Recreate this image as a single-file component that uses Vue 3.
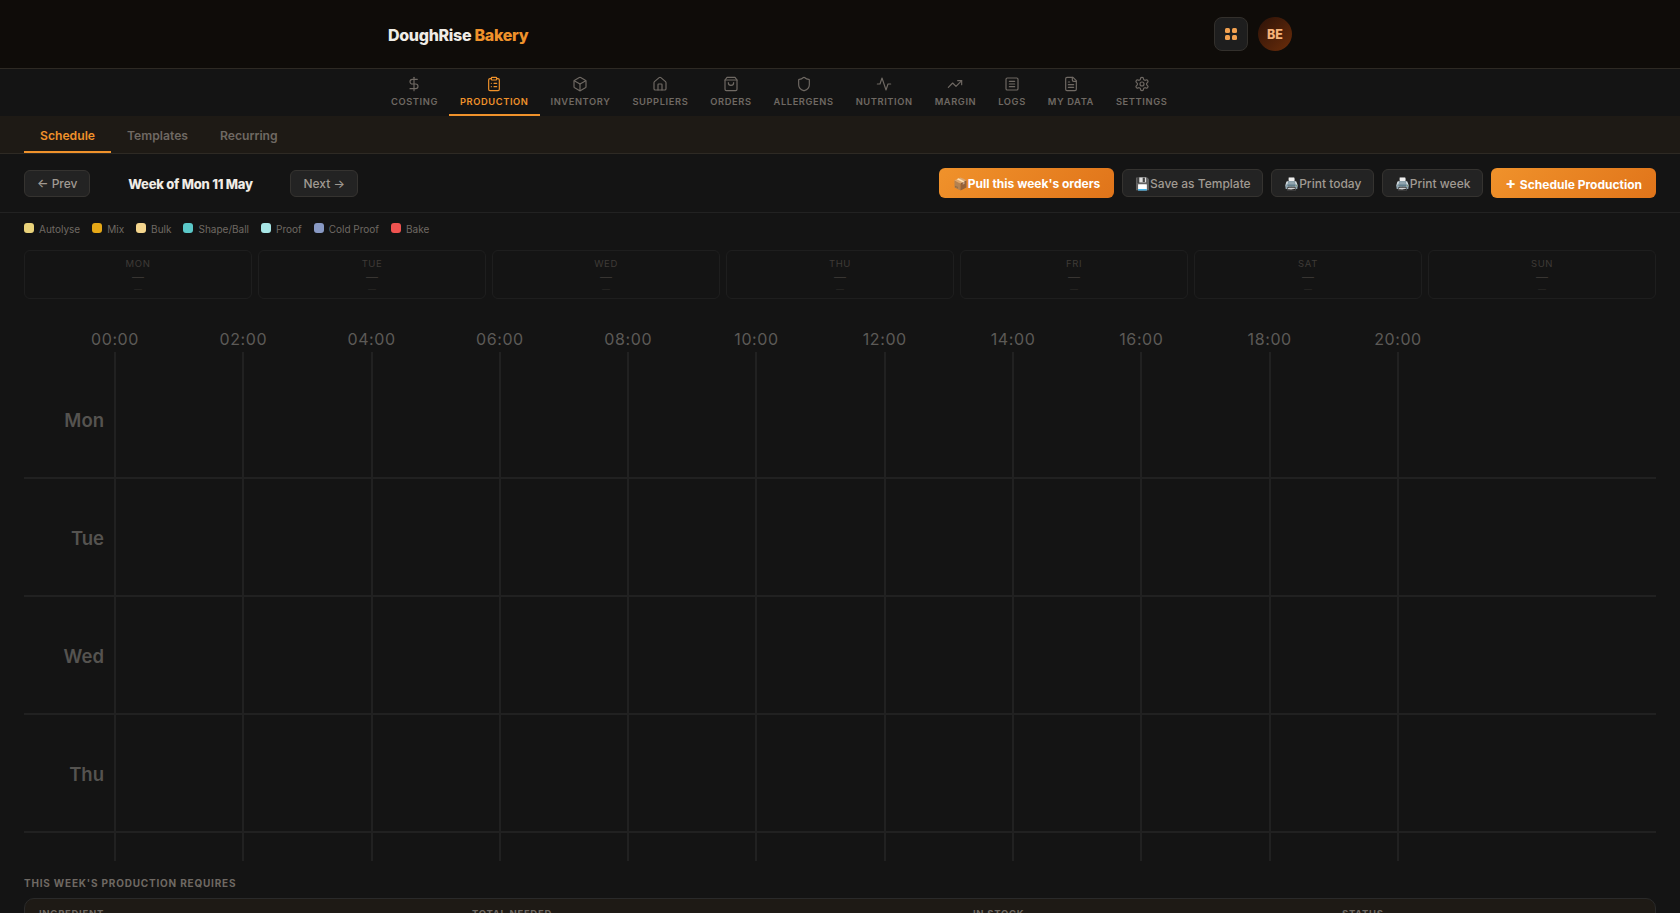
<script setup>
const navItems = [
  { label: 'COSTING', paths: ['M12 2v20', 'M17 5H9.5a3.5 3.5 0 0 0 0 7h5a3.5 3.5 0 0 1 0 7H6'] },
  { label: 'PRODUCTION', active: true, paths: ['M9 2h6a1 1 0 0 1 1 1v2a1 1 0 0 1-1 1H9a1 1 0 0 1-1-1V3a1 1 0 0 1 1-1z', 'M16 4h2a2 2 0 0 1 2 2v14a2 2 0 0 1-2 2H6a2 2 0 0 1-2-2V6a2 2 0 0 1 2-2h2', 'M12 11h4', 'M12 16h4', 'M8 11h.01', 'M8 16h.01'] },
  { label: 'INVENTORY', paths: ['M21 8a2 2 0 0 0-1-1.73l-7-4a2 2 0 0 0-2 0l-7 4A2 2 0 0 0 3 8v8a2 2 0 0 0 1 1.73l7 4a2 2 0 0 0 2 0l7-4A2 2 0 0 0 21 16z', 'M3.3 7 12 12l8.7-5', 'M12 22V12'] },
  { label: 'SUPPLIERS', paths: ['M15 21v-8a1 1 0 0 0-1-1h-4a1 1 0 0 0-1 1v8', 'M3 10a2 2 0 0 1 .71-1.53l7-6a2 2 0 0 1 2.58 0l7 6A2 2 0 0 1 21 10v9a2 2 0 0 1-2 2H5a2 2 0 0 1-2-2z'] },
  { label: 'ORDERS', paths: ['M6 2 3 6v14a2 2 0 0 0 2 2h14a2 2 0 0 0 2-2V6l-3-4z', 'M3 6h18', 'M16 10a4 4 0 0 1-8 0'] },
  { label: 'ALLERGENS', paths: ['M20 13c0 5-3.5 7.5-7.66 8.95a1 1 0 0 1-.67-.01C7.5 20.5 4 18 4 13V6a1 1 0 0 1 1-1c2 0 4.5-1.2 6.24-2.72a1.17 1.17 0 0 1 1.52 0C14.51 3.81 17 5 19 5a1 1 0 0 1 1 1z'] },
  { label: 'NUTRITION', paths: ['M22 12h-4l-3 9L9 3l-3 9H2'] },
  { label: 'MARGIN', paths: ['M22 7 13.5 15.5 8.5 10.5 2 17', 'M16 7h6v6'] },
  { label: 'LOGS', paths: ['M5 3h14a2 2 0 0 1 2 2v14a2 2 0 0 1-2 2H5a2 2 0 0 1-2-2V5a2 2 0 0 1 2-2z', 'M8 8h8', 'M8 12h8', 'M8 16h8'] },
  { label: 'MY DATA', paths: ['M15 2H6a2 2 0 0 0-2 2v16a2 2 0 0 0 2 2h12a2 2 0 0 0 2-2V7z', 'M14 2v4a2 2 0 0 0 2 2h4', 'M10 9H8', 'M16 13H8', 'M16 17H8'] },
  { label: 'SETTINGS', paths: ['M12.22 2h-.44a2 2 0 0 0-2 2v.18a2 2 0 0 1-1 1.73l-.43.25a2 2 0 0 1-2 0l-.15-.08a2 2 0 0 0-2.73.73l-.22.38a2 2 0 0 0 .73 2.73l.15.1a2 2 0 0 1 1 1.72v.51a2 2 0 0 1-1 1.74l-.15.09a2 2 0 0 0-.73 2.73l.22.38a2 2 0 0 0 2.73.73l.15-.08a2 2 0 0 1 2 0l.43.25a2 2 0 0 1 1 1.73V20a2 2 0 0 0 2 2h.44a2 2 0 0 0 2-2v-.18a2 2 0 0 1 1-1.73l.43-.25a2 2 0 0 1 2 0l.15.08a2 2 0 0 0 2.73-.73l.22-.39a2 2 0 0 0-.73-2.73l-.15-.08a2 2 0 0 1-1-1.74v-.5a2 2 0 0 1 1-1.74l.15-.09a2 2 0 0 0 .73-2.73l-.22-.38a2 2 0 0 0-2.73-.73l-.15.08a2 2 0 0 1-2 0l-.43-.25a2 2 0 0 1-1-1.73V4a2 2 0 0 0-2-2z', 'M15 12a3 3 0 1 1-6 0 3 3 0 0 1 6 0z'] }
]
const subTabs = ['Schedule', 'Templates', 'Recurring']
const legend = [
  { label: 'Autolyse', color: '#e9d27a' },
  { label: 'Mix', color: '#e6a817' },
  { label: 'Bulk', color: '#f4d58d' },
  { label: 'Shape/Ball', color: '#5bc8c8' },
  { label: 'Proof', color: '#a8e6e6' },
  { label: 'Cold Proof', color: '#8899c4' },
  { label: 'Bake', color: '#ef5350' }
]
const weekDays = ['MON', 'TUE', 'WED', 'THU', 'FRI', 'SAT', 'SUN']
const hours = ['00:00', '02:00', '04:00', '06:00', '08:00', '10:00', '12:00', '14:00', '16:00', '18:00', '20:00']
const rows = ['Mon', 'Tue', 'Wed', 'Thu']
</script>

<template>
  <div class="page">
    <header class="topbar">
      <div class="logo">DoughRise <span>Bakery</span></div>
      <div class="top-actions">
        <button class="grid-btn" aria-label="Apps">
          <span></span><span></span><span></span><span></span>
        </button>
        <div class="avatar">BE</div>
      </div>
    </header>

    <nav class="mainnav">
      <a v-for="item in navItems" :key="item.label" class="nav-item" :class="{ active: item.active }">
        <svg viewBox="0 0 24 24" width="16" height="16" fill="none" stroke="currentColor" stroke-width="1.75" stroke-linecap="round" stroke-linejoin="round">
          <path v-for="(d, i) in item.paths" :key="i" :d="d" />
        </svg>
        <span>{{ item.label }}</span>
      </a>
    </nav>

    <div class="subtabs">
      <a v-for="(t, i) in subTabs" :key="t" class="subtab" :class="{ active: i === 0 }">{{ t }}</a>
    </div>

    <div class="toolbar">
      <div class="week-nav">
        <button class="btn small">← Prev</button>
        <span class="week-label">Week of Mon 11 May</span>
        <button class="btn small">Next →</button>
      </div>
      <div class="actions">
        <button class="btn primary">📦Pull this week's orders</button>
        <button class="btn">💾Save as Template</button>
        <button class="btn">🖨️Print today</button>
        <button class="btn">🖨️Print week</button>
        <button class="btn primary"><span class="plus">+</span> Schedule Production</button>
      </div>
    </div>

    <div class="legend">
      <div v-for="l in legend" :key="l.label" class="legend-item">
        <i :style="{ background: l.color }"></i>{{ l.label }}
      </div>
    </div>

    <div class="week-cards">
      <div v-for="d in weekDays" :key="d" class="week-card">
        <div class="wc-day">{{ d }}</div>
        <div class="wc-main">—</div>
        <div class="wc-sub">—</div>
      </div>
    </div>

    <section class="gantt">
      <div class="gantt-head">
        <div v-for="h in hours" :key="h" class="hour">{{ h }}</div>
      </div>
      <div class="gantt-body">
        <div class="vlines">
          <i v-for="h in hours" :key="h"></i>
        </div>
        <div v-for="r in rows" :key="r" class="gantt-row">
          <span>{{ r }}</span>
        </div>
        <div class="gantt-tail"></div>
      </div>
    </section>

    <section class="req">
      <h3>THIS WEEK'S PRODUCTION REQUIRES</h3>
      <div class="req-table">
        <span class="c1">INGREDIENT</span>
        <span class="c2">TOTAL NEEDED</span>
        <span class="c3">IN STOCK</span>
        <span class="c4">STATUS</span>
      </div>
    </section>
  </div>
</template>

<style scoped>
.page {
  height: 913px;
  overflow: hidden;
  background: #141414;
  font-family: Inter, "Noto Sans", sans-serif;
  color: #f0ece6;
}
.topbar {
  height: 68px;
  box-sizing: content-box;
  border-bottom: 1px solid #2e2a24;
  background: #0f0c09;
  display: flex;
  align-items: center;
  justify-content: space-between;
  padding: 0 388px;
}
.logo {
  margin-top: 2px;
  font-size: 16px;
  font-weight: 800;
  letter-spacing: -0.3px;
  color: #f0ece6;
}
.logo span { color: #f0922b; }
.top-actions { display: flex; align-items: center; gap: 10px; }
.grid-btn {
  width: 34px;
  height: 34px;
  padding: 0;
  box-sizing: border-box;
  border: 1px solid #33302c;
  border-radius: 8px;
  background: #1e1e1e;
  display: grid;
  grid-template-columns: 5px 5px;
  grid-template-rows: 5px 5px;
  gap: 2.5px;
  place-content: center;
}
.grid-btn span { background: #f0a050; border-radius: 1.5px; }
.avatar {
  width: 34px;
  height: 34px;
  border-radius: 50%;
  background: linear-gradient(135deg, #2c1208, #6b2d0a);
  color: #f5b27a;
  font-size: 12.5px;
  font-weight: 800;
  padding-top: 1px;
  box-sizing: border-box;
  display: flex;
  align-items: center;
  justify-content: center;
}
.mainnav {
  height: 47px;
  background: #141414;
  display: flex;
  justify-content: flex-start;
  padding-left: 380px;
  gap: 0;
}
.nav-item {
  padding: 7px 11px 0;
  box-sizing: border-box;
  height: 47px;
  display: flex;
  flex-direction: column;
  align-items: center;
  gap: 4px;
  color: #6f6963;
  font-size: 9.3px;
  font-weight: 600;
  letter-spacing: 0.6px;
  border-bottom: 2px solid transparent;
}
.nav-item.active { color: #f0922b; border-bottom-color: #f0922b; }
.subtabs {
  height: 38px;
  box-sizing: border-box;
  background: #1e1a15;
  border-bottom: 1px solid #2e2a24;
  display: flex;
  padding-left: 24px;
}
.subtab {
  padding: 2px 16px 0;
  line-height: 36px;
  height: 37px;
  box-sizing: border-box;
  font-size: 12.16px;
  font-weight: 600;
  color: #6f6963;
  border-bottom: 2px solid transparent;
}
.subtab.active { color: #f0922b; border-bottom-color: #f0922b; }
.toolbar {
  height: 59px;
  box-sizing: border-box;
  border-bottom: 1px solid #222;
  display: flex;
  align-items: center;
  justify-content: space-between;
  padding: 0 24px;
}
.week-nav { display: flex; align-items: center; }
.week-label {
  width: 200px;
  padding-top: 1px;
  text-align: center;
  font-size: 13px;
  font-weight: 800;
  letter-spacing: -0.25px;
  color: #f0ece6;
}
.actions { display: flex; align-items: center; gap: 8px; }
.btn {
  height: 28px;
  padding: 1px 11.75px 0;
  font-family: inherit;
  font-size: 12px;
  font-weight: 500;
  color: #a09a92;
  background: #232323;
  border: 1px solid #353330;
  border-radius: 6px;
  white-space: nowrap;
}
.btn.small { height: 27px; padding: 1px 12px 0; }
.btn.primary {
  height: 30px;
  padding: 1px 14px 0;
  font-weight: 700;
  color: #fff;
  border: none;
  background: linear-gradient(135deg, #f0922b, #e0741a);
}
.plus { font-size: 16px; line-height: 1; margin-right: 1px; }
.legend {
  height: 37px;
  box-sizing: border-box;
  padding: 0 24px 5px;
  display: flex;
  align-items: center;
  gap: 12px;
}
.legend-item {
  display: flex;
  align-items: center;
  gap: 5px;
  font-size: 10px;
  color: #6f6963;
}
.legend-item i {
  width: 10px;
  height: 10px;
  border-radius: 3px;
  margin-top: -3px;
}
.week-cards {
  display: grid;
  grid-template-columns: repeat(7, 1fr);
  gap: 6px;
  padding: 0 24px;
}
.week-card {
  height: 49px;
  box-sizing: border-box;
  border: 1px solid #1e1e1e;
  border-radius: 6px;
  display: flex;
  flex-direction: column;
  align-items: center;
  padding-top: 7px;
  color: #383532;
  font-size: 9.5px;
}
.wc-day { letter-spacing: 0.6px; line-height: 12px; color: #3f3b37; }
.wc-main { line-height: 14px; font-size: 12px; }
.wc-sub { line-height: 10px; font-size: 8px; color: #2c2a28; }
.gantt { padding: 0 24px; margin-top: 30px; }
.gantt-head {
  height: 23px;
  display: flex;
  padding-left: 91px;
}
.hour {
  flex: 0 0 128.3px;
  width: 128.3px;
  transform: translateX(-50%);
  text-align: center;
  font-size: 16px;
  line-height: 20px;
  letter-spacing: 0.6px;
  color: #5c5a57;
}
.gantt-body { position: relative; padding-top: 9px; }
.vlines {
  position: absolute;
  top: 0;
  bottom: 0;
  left: 90px;
  right: 0;
  display: flex;
}
.vlines i {
  flex: 0 0 128.3px;
  box-sizing: border-box;
  border-left: 2px solid #212121;
}
.gantt-row {
  height: 118px;
  box-sizing: border-box;
  border-bottom: 2px solid #212121;
  display: flex;
  align-items: center;
}
.gantt-row span {
  width: 80px;
  margin-top: 2px;
  text-align: right;
  font-size: 18.5px;
  font-weight: 600;
  color: #555350;
}
.gantt-tail { height: 28px; }
.req { padding: 0 24px; margin-top: 16px; }
.req h3 {
  margin: 0;
  font-size: 10px;
  font-weight: 700;
  letter-spacing: 0.8px;
  line-height: 13px;
  color: #6f6963;
}
.req-table {
  margin-top: 8px;
  height: 60px;
  box-sizing: border-box;
  background: #1e1a15;
  border: 1px solid #2a2a2a;
  border-radius: 10px;
  position: relative;
  font-size: 9.5px;
  font-weight: 700;
  letter-spacing: 0.7px;
  color: #6f6963;
}
.req-table span { position: absolute; top: 9px; }
.c1 { left: 14px; }
.c2 { left: 447px; }
.c3 { left: 948px; }
.c4 { left: 1317px; }
</style>
